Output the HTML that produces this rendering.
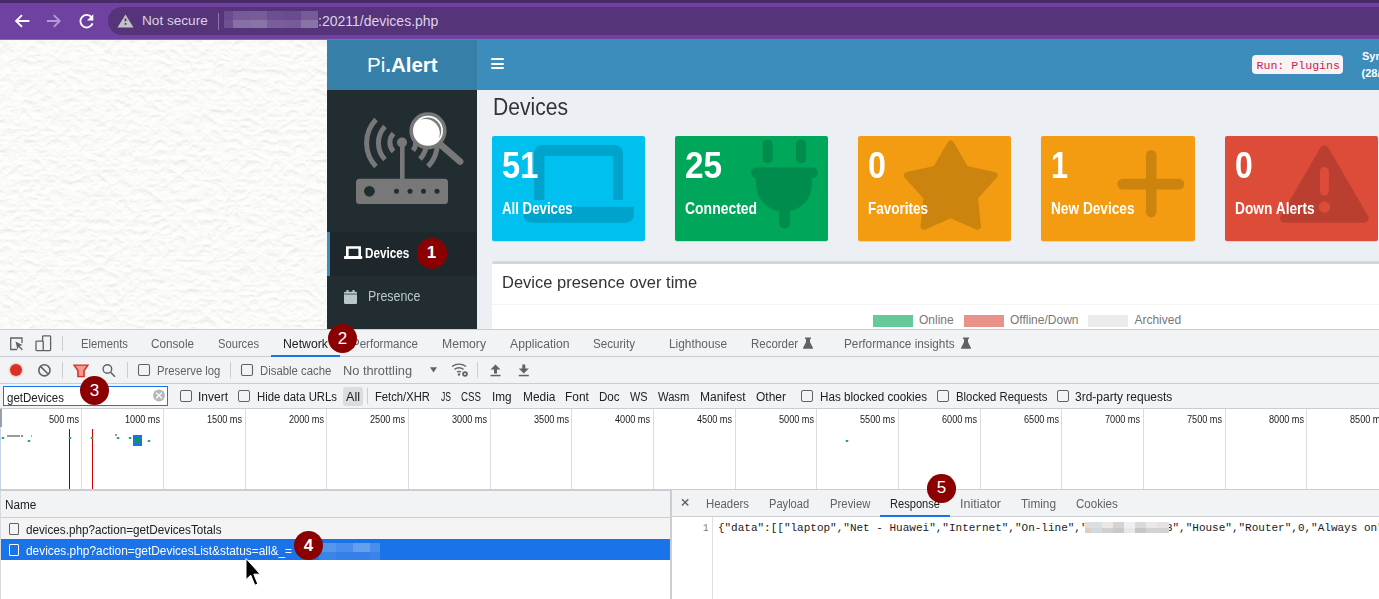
<!DOCTYPE html><html><head><meta charset="utf-8"><style>html,body{margin:0;padding:0;width:1379px;height:599px;overflow:hidden;position:relative;background:#fff}</style></head><body><div style="position:absolute;left:0px;top:0px;width:1379px;height:40px;background:#6f42a1;"></div><div style="position:absolute;left:0px;top:0px;width:1379px;height:3px;background:#482a68;"></div><div style="position:absolute;left:0px;top:39px;width:1379px;height:1px;background:#8a68ad;"></div><div style="position:absolute;left:108px;top:7px;width:1300px;height:28px;background:#553479;border-radius:14px;"></div><svg style="position:absolute;left:0;top:0" width="140" height="40">
<g fill="none" stroke="#fff" stroke-width="1.9" stroke-linejoin="miter">
<path d="M29.4 21H16.2M22 15.1L16.1 21L22 26.9"/>
</g>
<g fill="none" stroke="#b39ad3" stroke-width="1.9">
<path d="M46.9 21H59.6M53.8 15.1L59.7 21L53.8 26.9"/>
</g>
<path d="M91.9 17.6A6.3 6.3 0 1 0 92.6 23.4" fill="none" stroke="#fff" stroke-width="1.9"/>
<path d="M93.3 14.3v6.3h-6.3z" fill="#fff"/>
<path d="M125.5 14.5L133.5 27.5H117.5Z" fill="#c4c2c8"/>
<rect x="124.6" y="18.5" width="1.8" height="2.8" fill="#553479"/>
<rect x="124.6" y="23" width="1.8" height="1.8" fill="#553479"/>
</svg><div style="position:absolute;left:142px;top:14.49px;font:normal 13.6px/13.6px 'Liberation Sans', sans-serif;color:#ddd3e8;white-space:nowrap;">Not secure</div><div style="position:absolute;left:218px;top:13px;width:1px;height:17px;background:#8d76a8;"></div><div style="position:absolute;left:224px;top:11px;width:9px;height:8.9px;background:#6a4b8f;"></div><div style="position:absolute;left:224px;top:19.9px;width:9px;height:7.9px;background:#6e5093;"></div><div style="position:absolute;left:233px;top:11px;width:17px;height:8.9px;background:#765a98;"></div><div style="position:absolute;left:233px;top:19.9px;width:17px;height:7.9px;background:#8870a5;"></div><div style="position:absolute;left:250px;top:11px;width:17.2px;height:8.9px;background:#785c99;"></div><div style="position:absolute;left:250px;top:19.9px;width:17.2px;height:7.9px;background:#8a74a6;"></div><div style="position:absolute;left:267.2px;top:11px;width:16.8px;height:8.9px;background:#6c4f8f;"></div><div style="position:absolute;left:267.2px;top:19.9px;width:16.8px;height:7.9px;background:#785e9a;"></div><div style="position:absolute;left:284px;top:11px;width:16.9px;height:8.9px;background:#694c8d;"></div><div style="position:absolute;left:284px;top:19.9px;width:16.9px;height:7.9px;background:#765c98;"></div><div style="position:absolute;left:300.9px;top:11px;width:17.1px;height:8.9px;background:#775b98;"></div><div style="position:absolute;left:300.9px;top:19.9px;width:17.1px;height:7.9px;background:#8a73a6;"></div><div style="position:absolute;left:318px;top:14.15px;font:normal 14px/14px 'Liberation Sans', sans-serif;color:#ddd3e8;white-space:nowrap;">:20211/devices.php</div><svg style="position:absolute;left:0;top:40px" width="327" height="289">
<filter id="lt" x="0" y="0" width="100%" height="100%"><feTurbulence type="turbulence" baseFrequency="0.075 0.1" numOctaves="3" seed="11" result="n"/>
<feDiffuseLighting in="n" surfaceScale="2.2" lighting-color="#ffffff" diffuseConstant="1.0"><feDistantLight azimuth="90" elevation="60"/></feDiffuseLighting>
<feColorMatrix values="0.25 0 0 0 0.745  0.25 0 0 0 0.745  0.25 0 0 0 0.735  0 0 0 1 0"/></filter>
<rect width="327" height="289" fill="#f6f6f4"/>
<rect width="327" height="289" filter="url(#lt)"/>
</svg><div style="position:absolute;left:327px;top:40px;width:150px;height:50px;background:#367fa9;"></div><div style="position:absolute;left:477px;top:40px;width:902px;height:50px;background:#3c8dbc;"></div><div style="position:absolute;left:327px;top:90px;width:150px;height:239px;background:#222d32;"></div><div style="position:absolute;left:477px;top:90px;width:902px;height:239px;background:#ecf0f5;"></div><div style="position:absolute;left:367px;top:54.65px;font:20.5px/20.5px 'Liberation Sans', sans-serif;color:#fff;white-space:nowrap">Pi<b>.Alert</b></div><div style="position:absolute;left:491px;top:58px;width:13px;height:2.2px;background:#fff;border-radius:1px;"></div><div style="position:absolute;left:491px;top:62.5px;width:13px;height:2.2px;background:#fff;border-radius:1px;"></div><div style="position:absolute;left:491px;top:67px;width:13px;height:2.2px;background:#fff;border-radius:1px;"></div><div style="position:absolute;left:1252px;top:55px;width:91px;height:19px;background:#f9f2f4;border-radius:4px;"></div><div style="position:absolute;left:1256.5px;top:59.78px;font:normal 11.6px/11.6px 'Liberation Mono', monospace;color:#c7254e;white-space:nowrap;">Run: Plugins</div><div style="position:absolute;left:1362px;top:50.99px;font:bold 11px/11px 'Liberation Sans', sans-serif;color:#fff;white-space:nowrap;">Sym</div><div style="position:absolute;left:1361.5px;top:67.69px;font:bold 11px/11px 'Liberation Sans', sans-serif;color:#fff;white-space:nowrap;">(28/</div><svg style="position:absolute;left:327px;top:90px" width="150" height="140" viewBox="327 90 150 140">
<g fill="#787878">
<rect x="356" y="178.7" width="92" height="25.3" rx="3.5"/>
<rect x="400" y="142" width="4.6" height="38"/>
<circle cx="402" cy="142.5" r="5"/>
</g>
<circle cx="369.4" cy="191.3" r="5.4" fill="#222d32"/>
<g fill="#222d32"><circle cx="396.5" cy="191.3" r="2.5"/><circle cx="410" cy="191.3" r="2.5"/><circle cx="423.5" cy="191.3" r="2.5"/><circle cx="437" cy="191.3" r="2.5"/></g>
<g fill="none" stroke="#787878" stroke-width="5">
<path d="M376 119.5A34 34 0 0 0 376 166.5"/>
<path d="M385 126.5A24 24 0 0 0 385 159.5"/>
<path d="M393.5 133.5A13 13 0 0 0 393.5 151.5"/>
<path d="M413 150.5A13 13 0 0 0 413 134.5" />
<path d="M420 159A24 24 0 0 0 420 126"/>
<path d="M428 166.5A34 34 0 0 0 428 119.5"/>
</g>
<line x1="441" y1="145" x2="460" y2="161.5" stroke="#787878" stroke-width="6.8" stroke-linecap="round"/>
<circle cx="428" cy="130.8" r="18.6" fill="#787878"/>
<circle cx="428" cy="130.8" r="15" fill="#fff"/>
<mask id="cm"><rect x="400" y="100" width="60" height="60" fill="#fff"/><circle cx="425.2" cy="133.6" r="14.6" fill="#000"/></mask><circle cx="428" cy="130.8" r="13.3" fill="#7c7c7c" mask="url(#cm)"/>
</svg><div style="position:absolute;left:327px;top:232px;width:150px;height:44px;background:#1e282c;"></div><div style="position:absolute;left:327px;top:232px;width:3px;height:44px;background:#3c8dbc;"></div><svg style="position:absolute;left:344px;top:246px" width="19" height="13" viewBox="0 0 19 13">
<path d="M2 0.2h15v9.8h-2.6V2.7H4.6V10H2z" fill="#fff"/>
<rect x="0" y="10" width="18.3" height="3" rx="0.8" fill="#fff"/>
</svg><div style="position:absolute;left:365.3px;top:246.15px;font:bold 14px/14px 'Liberation Sans', sans-serif;color:#fff;white-space:nowrap;transform:scaleX(0.837);transform-origin:0 0;">Devices</div><svg style="position:absolute;left:344px;top:289px" width="14" height="16" viewBox="0 0 14 16">
<rect x="0" y="2.8" width="13" height="12.2" rx="1.3" fill="#b8c7ce"/>
<rect x="2.5" y="1" width="2" height="3" fill="#b8c7ce"/><rect x="8.5" y="1" width="2" height="3" fill="#b8c7ce"/>
<rect x="0" y="4.7" width="13" height="0.7" fill="#222d32"/>
</svg><div style="position:absolute;left:368px;top:290.12px;font:normal 13.8px/13.8px 'Liberation Sans', sans-serif;color:#b8c7ce;white-space:nowrap;transform:scaleX(0.9);transform-origin:0 0;">Presence</div><div style="position:absolute;left:492.5px;top:95.53px;font:normal 23px/23px 'Liberation Sans', sans-serif;color:#333;white-space:nowrap;transform:scaleX(0.918);transform-origin:0 0;">Devices</div><div style="position:absolute;left:492px;top:136px;width:152.7px;height:104.5px;background:#00c0ef;border-radius:2px;box-shadow:0 1px 1px rgba(0,0,0,0.1);"></div><div style="position:absolute;left:675px;top:136px;width:153px;height:104.5px;background:#00a65a;border-radius:2px;box-shadow:0 1px 1px rgba(0,0,0,0.1);"></div><div style="position:absolute;left:858px;top:136px;width:153px;height:104.5px;background:#f39c12;border-radius:2px;box-shadow:0 1px 1px rgba(0,0,0,0.1);"></div><div style="position:absolute;left:1041px;top:136px;width:154px;height:104.5px;background:#f39c12;border-radius:2px;box-shadow:0 1px 1px rgba(0,0,0,0.1);"></div><div style="position:absolute;left:1225px;top:136px;width:152.5px;height:104.5px;background:#dd4b39;border-radius:2px;box-shadow:0 1px 1px rgba(0,0,0,0.1);"></div><svg style="position:absolute;left:492px;top:136px" width="153" height="105" viewBox="0 0 153 105"><path d="M42 64V17a8 8 0 0 1 8 -8h73a8 8 0 0 1 8 8V64H121V20H52.4V64Z" fill="rgba(0,0,0,0.15)"/><path d="M31 70.7h111v8a8 8 0 0 1 -8 8h-95a8 8 0 0 1 -8 -8z" fill="rgba(0,0,0,0.15)"/></svg><div style="position:absolute;left:502px;top:147.48px;font:bold 37px/37px 'Liberation Sans', sans-serif;color:#fff;white-space:nowrap;transform:scaleX(0.882);transform-origin:0 0;">51</div><div style="position:absolute;left:502px;top:200.03px;font:bold 16.5px/16.5px 'Liberation Sans', sans-serif;color:#fff;white-space:nowrap;transform:scaleX(0.803);transform-origin:0 0;">All Devices</div><svg style="position:absolute;left:675px;top:136px" width="153" height="105" viewBox="0 0 153 105"><g fill="#000" opacity="0.15"><rect x="87.6" y="3.4" width="10.1" height="24" rx="5"/><rect x="121" y="3.4" width="10.1" height="24" rx="5"/><rect x="76" y="31.5" width="67" height="10.5" rx="5.2"/><path d="M81 40H137V48A28 28 0 0 1 81 48Z"/><rect x="104" y="66" width="11" height="26.6" rx="5.5"/></g></svg><div style="position:absolute;left:685px;top:147.48px;font:bold 37px/37px 'Liberation Sans', sans-serif;color:#fff;white-space:nowrap;transform:scaleX(0.902);transform-origin:0 0;">25</div><div style="position:absolute;left:685px;top:200.03px;font:bold 16.5px/16.5px 'Liberation Sans', sans-serif;color:#fff;white-space:nowrap;transform:scaleX(0.846);transform-origin:0 0;">Connected</div><svg style="position:absolute;left:858px;top:136px" width="153" height="105" viewBox="0 0 153 105"><polygon points="92.70,8.00 107.39,33.27 135.97,39.44 116.48,61.23 119.44,90.31 92.70,78.50 65.96,90.31 68.92,61.23 49.43,39.44 78.01,33.27" fill="#000" stroke="#000" stroke-width="7" stroke-linejoin="round" opacity="0.15"/></svg><div style="position:absolute;left:868px;top:147.48px;font:bold 37px/37px 'Liberation Sans', sans-serif;color:#fff;white-space:nowrap;transform:scaleX(0.87);transform-origin:0 0;">0</div><div style="position:absolute;left:868px;top:200.03px;font:bold 16.5px/16.5px 'Liberation Sans', sans-serif;color:#fff;white-space:nowrap;transform:scaleX(0.819);transform-origin:0 0;">Favorites</div><svg style="position:absolute;left:1041px;top:136px" width="153" height="105" viewBox="0 0 153 105"><g fill="#000" opacity="0.15"><rect x="104.9" y="13.9" width="10.6" height="67.5" rx="5.3"/><rect x="76.3" y="42.7" width="67.1" height="10.9" rx="5.4"/></g></svg><div style="position:absolute;left:1051px;top:147.48px;font:bold 37px/37px 'Liberation Sans', sans-serif;color:#fff;white-space:nowrap;transform:scaleX(0.826);transform-origin:0 0;">1</div><div style="position:absolute;left:1051px;top:200.03px;font:bold 16.5px/16.5px 'Liberation Sans', sans-serif;color:#fff;white-space:nowrap;transform:scaleX(0.828);transform-origin:0 0;">New Devices</div><svg style="position:absolute;left:1225px;top:136px" width="153" height="105" viewBox="0 0 153 105"><g opacity="0.15"><path d="M99.4 13.8L139.2 82.2H59.5Z" fill="#000" stroke="#000" stroke-width="9" stroke-linejoin="round"/></g><g fill="#dd4b39"><rect x="94.9" y="31" width="9" height="28.6" rx="4.5"/><circle cx="99.4" cy="71" r="5.7"/></g></svg><div style="position:absolute;left:1235px;top:147.48px;font:bold 37px/37px 'Liberation Sans', sans-serif;color:#fff;white-space:nowrap;transform:scaleX(0.86);transform-origin:0 0;">0</div><div style="position:absolute;left:1235px;top:200.03px;font:bold 16.5px/16.5px 'Liberation Sans', sans-serif;color:#fff;white-space:nowrap;transform:scaleX(0.833);transform-origin:0 0;">Down Alerts</div><div style="position:absolute;left:492px;top:261px;width:887px;height:68px;background:#fff;border-top:3px solid #d2d6de;box-sizing:border-box;border-radius:3px 0 0 0;"></div><div style="position:absolute;left:492px;top:304px;width:887px;height:1px;background:#f4f4f4;"></div><div style="position:absolute;left:502.3px;top:273.61px;font:normal 17px/17px 'Liberation Sans', sans-serif;color:#333;white-space:nowrap;transform:scaleX(0.97);transform-origin:0 0;">Device presence over time</div><div style="position:absolute;left:873px;top:315px;width:40px;height:12px;background:#66c99a;"></div><div style="position:absolute;left:919px;top:313.84px;font:normal 12px/12px 'Liberation Sans', sans-serif;color:#777;white-space:nowrap;">Online</div><div style="position:absolute;left:963.5px;top:315px;width:40px;height:12px;background:#e8928a;"></div><div style="position:absolute;left:1010px;top:313.84px;font:normal 12px/12px 'Liberation Sans', sans-serif;color:#777;white-space:nowrap;">Offline/Down</div><div style="position:absolute;left:1088px;top:315px;width:40px;height:12px;background:#ebebeb;"></div><div style="position:absolute;left:1134.4px;top:313.84px;font:normal 12px/12px 'Liberation Sans', sans-serif;color:#777;white-space:nowrap;">Archived</div><div style="position:absolute;left:0px;top:329px;width:1379px;height:270px;background:#f1f3f4;"></div><div style="position:absolute;left:0px;top:329px;width:1379px;height:1px;background:#cacdd1;"></div><div style="position:absolute;left:0px;top:356px;width:1379px;height:1px;background:#cacdd1;"></div><div style="position:absolute;left:0px;top:383px;width:1379px;height:1px;background:#cacdd1;"></div><div style="position:absolute;left:0px;top:407.5px;width:1379px;height:1px;background:#cacdd1;"></div><svg style="position:absolute;left:0;top:330px" width="70" height="26" viewBox="0 330 70 26">
<g fill="none" stroke="#5f6368" stroke-width="1.3">
<path d="M17 349.5H10.7V338H22V343"/>
<rect x="42.6" y="335.8" width="8" height="14.8" rx="0.8"/><rect x="36" y="341.2" width="7.2" height="9.4" rx="0.8" fill="#f1f3f4"/>
</g>
<path d="M15.5 341.5L22.5 345L19.6 346L22.8 349.2L21.8 350.2L18.6 347L17.5 349.8Z" fill="#5f6368"/>
<rect x="62" y="336" width="1" height="15" fill="#cacdd1"/>
</svg><div style="position:absolute;left:81px;top:338.49px;font:normal 12.3px/12.3px 'Liberation Sans', sans-serif;color:#5f6368;white-space:nowrap;transform:scaleX(0.917);transform-origin:0 0;">Elements</div><div style="position:absolute;left:151px;top:338.49px;font:normal 12.3px/12.3px 'Liberation Sans', sans-serif;color:#5f6368;white-space:nowrap;transform:scaleX(0.953);transform-origin:0 0;">Console</div><div style="position:absolute;left:217.5px;top:338.49px;font:normal 12.3px/12.3px 'Liberation Sans', sans-serif;color:#5f6368;white-space:nowrap;transform:scaleX(0.909);transform-origin:0 0;">Sources</div><div style="position:absolute;left:282.8px;top:338.49px;font:normal 12.3px/12.3px 'Liberation Sans', sans-serif;color:#202124;white-space:nowrap;transform:scaleX(0.998);transform-origin:0 0;">Network</div><div style="position:absolute;left:352px;top:338.49px;font:normal 12.3px/12.3px 'Liberation Sans', sans-serif;color:#5f6368;white-space:nowrap;transform:scaleX(0.937);transform-origin:0 0;">Performance</div><div style="position:absolute;left:441.8px;top:338.49px;font:normal 12.3px/12.3px 'Liberation Sans', sans-serif;color:#5f6368;white-space:nowrap;transform:scaleX(0.991);transform-origin:0 0;">Memory</div><div style="position:absolute;left:509.8px;top:338.49px;font:normal 12.3px/12.3px 'Liberation Sans', sans-serif;color:#5f6368;white-space:nowrap;transform:scaleX(0.991);transform-origin:0 0;">Application</div><div style="position:absolute;left:593.4px;top:338.49px;font:normal 12.3px/12.3px 'Liberation Sans', sans-serif;color:#5f6368;white-space:nowrap;transform:scaleX(0.945);transform-origin:0 0;">Security</div><div style="position:absolute;left:668.5px;top:338.49px;font:normal 12.3px/12.3px 'Liberation Sans', sans-serif;color:#5f6368;white-space:nowrap;transform:scaleX(0.964);transform-origin:0 0;">Lighthouse</div><div style="position:absolute;left:750.8px;top:338.49px;font:normal 12.3px/12.3px 'Liberation Sans', sans-serif;color:#5f6368;white-space:nowrap;transform:scaleX(0.933);transform-origin:0 0;">Recorder</div><div style="position:absolute;left:844.4px;top:338.49px;font:normal 12.3px/12.3px 'Liberation Sans', sans-serif;color:#5f6368;white-space:nowrap;transform:scaleX(0.957);transform-origin:0 0;">Performance insights</div><div style="position:absolute;left:271px;top:354.7px;width:69px;height:2px;background:#1a73e8;"></div><svg style="position:absolute;left:803px;top:337px" width="10" height="12" viewBox="0 0 10 12"><path d="M2 0.5h6v1.5h-1v3l3 6v0.8h-10v-0.8l3-6v-3h-1z" fill="#5f6368"/></svg><svg style="position:absolute;left:960.5px;top:337px" width="10" height="12" viewBox="0 0 10 12"><path d="M2 0.5h6v1.5h-1v3l3 6v0.8h-10v-0.8l3-6v-3h-1z" fill="#5f6368"/></svg><svg style="position:absolute;left:0;top:357px" width="540" height="26" viewBox="0 357 540 26">
<circle cx="16" cy="370" r="7.5" fill="#d93025" opacity="0.15"/>
<circle cx="16" cy="370" r="6" fill="#d93025"/>
<circle cx="44.4" cy="370.3" r="5.6" fill="none" stroke="#5f6368" stroke-width="1.6"/>
<path d="M40.5 366.4L48.3 374.2" stroke="#5f6368" stroke-width="1.6"/>
<rect x="62" y="362" width="1" height="16" fill="#cacdd1"/>
<path d="M74 365.2H88L84 370.5V376.6H78V370.5Z" fill="#e8685e"/>
<path d="M75.6 366H86.4L83 370.2V375.7H79V370.2Z" fill="#f09a92"/>
<path d="M74 365.2H88L84.2 370.5V376.6H77.8V370.5Z" fill="none" stroke="#d93025" stroke-width="1.3"/>
<circle cx="107.4" cy="369" r="4.3" fill="none" stroke="#5f6368" stroke-width="1.4"/>
<path d="M110.5 372.2L115 376.7" stroke="#5f6368" stroke-width="1.6"/>
<rect x="127" y="362" width="1" height="16" fill="#cacdd1"/>
<rect x="138.5" y="364.5" width="11" height="11" rx="1.5" fill="none" stroke="#5f6368" stroke-width="1.1"/>
<rect x="230" y="362" width="1" height="16" fill="#cacdd1"/>
<rect x="241.5" y="364.5" width="11" height="11" rx="1.5" fill="none" stroke="#5f6368" stroke-width="1.1"/>
<path d="M430 367.3H437L433.5 372.5Z" fill="#5f6368"/>
<path d="M452 366.5A12 12 0 0 1 466 366.5" fill="none" stroke="#5f6368" stroke-width="1.4"/>
<path d="M454.5 369.3A8 8 0 0 1 463.5 369.3" fill="none" stroke="#5f6368" stroke-width="1.4"/>
<path d="M457 372A4 4 0 0 1 461 372" fill="none" stroke="#5f6368" stroke-width="1.4"/>
<circle cx="459" cy="374.5" r="1.2" fill="#5f6368"/>
<circle cx="465" cy="374" r="2.8" fill="#5f6368"/><circle cx="465" cy="374" r="1" fill="#f1f3f4"/>
<rect x="477" y="362" width="1" height="16" fill="#cacdd1"/>
<path d="M495.5 364.5L490.5 369.5H494V373.5H497V369.5H500.5Z" fill="#5f6368"/><rect x="490.5" y="374.8" width="10" height="1.5" fill="#5f6368"/>
<path d="M523.8 373.5L518.8 368.5H522.3V364.5H525.3V368.5H528.8Z" fill="#5f6368"/><rect x="518.8" y="374.8" width="10" height="1.5" fill="#5f6368"/>
</svg><div style="position:absolute;left:156.6px;top:365.49px;font:normal 12.3px/12.3px 'Liberation Sans', sans-serif;color:#5f6368;white-space:nowrap;transform:scaleX(0.918);transform-origin:0 0;">Preserve log</div><div style="position:absolute;left:259.6px;top:365.49px;font:normal 12.3px/12.3px 'Liberation Sans', sans-serif;color:#5f6368;white-space:nowrap;transform:scaleX(0.924);transform-origin:0 0;">Disable cache</div><div style="position:absolute;left:342.5px;top:365.49px;font:normal 12.3px/12.3px 'Liberation Sans', sans-serif;color:#5f6368;white-space:nowrap;transform:scaleX(1.041);transform-origin:0 0;">No throttling</div><div style="position:absolute;left:3px;top:386px;width:164.5px;height:19.5px;background:#fff;border:1px solid #1a73e8;box-sizing:border-box;"></div><div style="position:absolute;left:7.3px;top:391.99px;font:normal 12.3px/12.3px 'Liberation Sans', sans-serif;color:#202124;white-space:nowrap;transform:scaleX(0.937);transform-origin:0 0;">getDevices</div><svg style="position:absolute;left:150px;top:386px" width="20" height="20" viewBox="150 386 20 20">
<circle cx="159" cy="395.4" r="6" fill="#b5b9be"/>
<path d="M156.2 392.6L161.8 398.2M161.8 392.6L156.2 398.2" stroke="#fff" stroke-width="1.3"/>
</svg><div style="position:absolute;left:179.5px;top:390px;width:12px;height:12px;background:transparent;border:1.1px solid #5f6368;border-radius:2px;box-sizing:border-box;"></div><div style="position:absolute;left:198px;top:391.49px;font:normal 12.3px/12.3px 'Liberation Sans', sans-serif;color:#202124;white-space:nowrap;transform:scaleX(0.975);transform-origin:0 0;">Invert</div><div style="position:absolute;left:238.0px;top:390px;width:12px;height:12px;background:transparent;border:1.1px solid #5f6368;border-radius:2px;box-sizing:border-box;"></div><div style="position:absolute;left:256.8px;top:391.49px;font:normal 12.3px/12.3px 'Liberation Sans', sans-serif;color:#202124;white-space:nowrap;transform:scaleX(0.921);transform-origin:0 0;">Hide data URLs</div><div style="position:absolute;left:343px;top:386.5px;width:19.6px;height:19px;background:#dadce0;border-radius:3px;"></div><div style="position:absolute;left:346px;top:391.49px;font:normal 12.3px/12.3px 'Liberation Sans', sans-serif;color:#202124;white-space:nowrap;transform:scaleX(1.024);transform-origin:0 0;">All</div><div style="position:absolute;left:367px;top:388px;width:1px;height:16px;background:#cacdd1;"></div><div style="position:absolute;left:375px;top:391.49px;font:normal 12.3px/12.3px 'Liberation Sans', sans-serif;color:#202124;white-space:nowrap;transform:scaleX(0.914);transform-origin:0 0;">Fetch/XHR</div><div style="position:absolute;left:441px;top:391.49px;font:normal 12.3px/12.3px 'Liberation Sans', sans-serif;color:#202124;white-space:nowrap;transform:scaleX(0.697);transform-origin:0 0;">JS</div><div style="position:absolute;left:461.4px;top:391.49px;font:normal 12.3px/12.3px 'Liberation Sans', sans-serif;color:#202124;white-space:nowrap;transform:scaleX(0.787);transform-origin:0 0;">CSS</div><div style="position:absolute;left:491.7px;top:391.49px;font:normal 12.3px/12.3px 'Liberation Sans', sans-serif;color:#202124;white-space:nowrap;transform:scaleX(0.956);transform-origin:0 0;">Img</div><div style="position:absolute;left:522.5px;top:391.49px;font:normal 12.3px/12.3px 'Liberation Sans', sans-serif;color:#202124;white-space:nowrap;transform:scaleX(0.97);transform-origin:0 0;">Media</div><div style="position:absolute;left:565px;top:391.49px;font:normal 12.3px/12.3px 'Liberation Sans', sans-serif;color:#202124;white-space:nowrap;transform:scaleX(0.967);transform-origin:0 0;">Font</div><div style="position:absolute;left:599px;top:391.49px;font:normal 12.3px/12.3px 'Liberation Sans', sans-serif;color:#202124;white-space:nowrap;transform:scaleX(0.942);transform-origin:0 0;">Doc</div><div style="position:absolute;left:630px;top:391.49px;font:normal 12.3px/12.3px 'Liberation Sans', sans-serif;color:#202124;white-space:nowrap;transform:scaleX(0.888);transform-origin:0 0;">WS</div><div style="position:absolute;left:658px;top:391.49px;font:normal 12.3px/12.3px 'Liberation Sans', sans-serif;color:#202124;white-space:nowrap;transform:scaleX(0.91);transform-origin:0 0;">Wasm</div><div style="position:absolute;left:700px;top:391.49px;font:normal 12.3px/12.3px 'Liberation Sans', sans-serif;color:#202124;white-space:nowrap;transform:scaleX(0.979);transform-origin:0 0;">Manifest</div><div style="position:absolute;left:756px;top:391.49px;font:normal 12.3px/12.3px 'Liberation Sans', sans-serif;color:#202124;white-space:nowrap;transform:scaleX(0.975);transform-origin:0 0;">Other</div><div style="position:absolute;left:801.0px;top:390px;width:12px;height:12px;background:transparent;border:1.1px solid #5f6368;border-radius:2px;box-sizing:border-box;"></div><div style="position:absolute;left:819.7px;top:391.49px;font:normal 12.3px/12.3px 'Liberation Sans', sans-serif;color:#202124;white-space:nowrap;transform:scaleX(0.949);transform-origin:0 0;">Has blocked cookies</div><div style="position:absolute;left:937.0px;top:390px;width:12px;height:12px;background:transparent;border:1.1px solid #5f6368;border-radius:2px;box-sizing:border-box;"></div><div style="position:absolute;left:955.6px;top:391.49px;font:normal 12.3px/12.3px 'Liberation Sans', sans-serif;color:#202124;white-space:nowrap;transform:scaleX(0.922);transform-origin:0 0;">Blocked Requests</div><div style="position:absolute;left:1057.0px;top:390px;width:12px;height:12px;background:transparent;border:1.1px solid #5f6368;border-radius:2px;box-sizing:border-box;"></div><div style="position:absolute;left:1075.4px;top:391.49px;font:normal 12.3px/12.3px 'Liberation Sans', sans-serif;color:#202124;white-space:nowrap;transform:scaleX(0.975);transform-origin:0 0;">3rd-party requests</div><div style="position:absolute;left:0px;top:408.5px;width:1379px;height:80.5px;background:#fff;"></div><div style="position:absolute;left:0px;top:489px;width:670px;height:2px;background:#cacdd1;"></div><div style="position:absolute;left:670px;top:489px;width:709px;height:1px;background:#cacdd1;"></div><div style="position:absolute;left:81px;top:409px;width:1px;height:80px;background:#dadce0;"></div><div style="position:absolute;left:48.63px;top:414.94px;font:normal 10px/10px 'Liberation Sans', sans-serif;color:#202124;white-space:nowrap;transform:scaleX(0.914);transform-origin:0 0;">500 ms</div><div style="position:absolute;left:163px;top:409px;width:1px;height:80px;background:#dadce0;"></div><div style="position:absolute;left:125.22px;top:414.94px;font:normal 10px/10px 'Liberation Sans', sans-serif;color:#202124;white-space:nowrap;transform:scaleX(0.914);transform-origin:0 0;">1000 ms</div><div style="position:absolute;left:245px;top:409px;width:1px;height:80px;background:#dadce0;"></div><div style="position:absolute;left:206.89px;top:414.94px;font:normal 10px/10px 'Liberation Sans', sans-serif;color:#202124;white-space:nowrap;transform:scaleX(0.914);transform-origin:0 0;">1500 ms</div><div style="position:absolute;left:326px;top:409px;width:1px;height:80px;background:#dadce0;"></div><div style="position:absolute;left:288.56px;top:414.94px;font:normal 10px/10px 'Liberation Sans', sans-serif;color:#202124;white-space:nowrap;transform:scaleX(0.914);transform-origin:0 0;">2000 ms</div><div style="position:absolute;left:408px;top:409px;width:1px;height:80px;background:#dadce0;"></div><div style="position:absolute;left:370.23px;top:414.94px;font:normal 10px/10px 'Liberation Sans', sans-serif;color:#202124;white-space:nowrap;transform:scaleX(0.914);transform-origin:0 0;">2500 ms</div><div style="position:absolute;left:490px;top:409px;width:1px;height:80px;background:#dadce0;"></div><div style="position:absolute;left:451.9px;top:414.94px;font:normal 10px/10px 'Liberation Sans', sans-serif;color:#202124;white-space:nowrap;transform:scaleX(0.914);transform-origin:0 0;">3000 ms</div><div style="position:absolute;left:571px;top:409px;width:1px;height:80px;background:#dadce0;"></div><div style="position:absolute;left:533.57px;top:414.94px;font:normal 10px/10px 'Liberation Sans', sans-serif;color:#202124;white-space:nowrap;transform:scaleX(0.914);transform-origin:0 0;">3500 ms</div><div style="position:absolute;left:653px;top:409px;width:1px;height:80px;background:#dadce0;"></div><div style="position:absolute;left:615.24px;top:414.94px;font:normal 10px/10px 'Liberation Sans', sans-serif;color:#202124;white-space:nowrap;transform:scaleX(0.914);transform-origin:0 0;">4000 ms</div><div style="position:absolute;left:735px;top:409px;width:1px;height:80px;background:#dadce0;"></div><div style="position:absolute;left:696.91px;top:414.94px;font:normal 10px/10px 'Liberation Sans', sans-serif;color:#202124;white-space:nowrap;transform:scaleX(0.914);transform-origin:0 0;">4500 ms</div><div style="position:absolute;left:816px;top:409px;width:1px;height:80px;background:#dadce0;"></div><div style="position:absolute;left:778.58px;top:414.94px;font:normal 10px/10px 'Liberation Sans', sans-serif;color:#202124;white-space:nowrap;transform:scaleX(0.914);transform-origin:0 0;">5000 ms</div><div style="position:absolute;left:898px;top:409px;width:1px;height:80px;background:#dadce0;"></div><div style="position:absolute;left:860.25px;top:414.94px;font:normal 10px/10px 'Liberation Sans', sans-serif;color:#202124;white-space:nowrap;transform:scaleX(0.914);transform-origin:0 0;">5500 ms</div><div style="position:absolute;left:980px;top:409px;width:1px;height:80px;background:#dadce0;"></div><div style="position:absolute;left:941.92px;top:414.94px;font:normal 10px/10px 'Liberation Sans', sans-serif;color:#202124;white-space:nowrap;transform:scaleX(0.914);transform-origin:0 0;">6000 ms</div><div style="position:absolute;left:1061px;top:409px;width:1px;height:80px;background:#dadce0;"></div><div style="position:absolute;left:1023.59px;top:414.94px;font:normal 10px/10px 'Liberation Sans', sans-serif;color:#202124;white-space:nowrap;transform:scaleX(0.914);transform-origin:0 0;">6500 ms</div><div style="position:absolute;left:1143px;top:409px;width:1px;height:80px;background:#dadce0;"></div><div style="position:absolute;left:1105.26px;top:414.94px;font:normal 10px/10px 'Liberation Sans', sans-serif;color:#202124;white-space:nowrap;transform:scaleX(0.914);transform-origin:0 0;">7000 ms</div><div style="position:absolute;left:1225px;top:409px;width:1px;height:80px;background:#dadce0;"></div><div style="position:absolute;left:1186.93px;top:414.94px;font:normal 10px/10px 'Liberation Sans', sans-serif;color:#202124;white-space:nowrap;transform:scaleX(0.914);transform-origin:0 0;">7500 ms</div><div style="position:absolute;left:1306px;top:409px;width:1px;height:80px;background:#dadce0;"></div><div style="position:absolute;left:1268.6px;top:414.94px;font:normal 10px/10px 'Liberation Sans', sans-serif;color:#202124;white-space:nowrap;transform:scaleX(0.914);transform-origin:0 0;">8000 ms</div><div style="position:absolute;left:1388px;top:409px;width:1px;height:80px;background:#dadce0;"></div><div style="position:absolute;left:1350.27px;top:414.94px;font:normal 10px/10px 'Liberation Sans', sans-serif;color:#202124;white-space:nowrap;transform:scaleX(0.914);transform-origin:0 0;">8500 ms</div><div style="position:absolute;left:0px;top:409px;width:2px;height:18px;background:#9aa0a6;"></div><div style="position:absolute;left:0px;top:427px;width:1px;height:62px;background:#c5d3ea;"></div><div style="position:absolute;left:69px;top:429px;width:1px;height:60px;background:#1a1aa6;"></div><div style="position:absolute;left:92px;top:429px;width:1px;height:60px;background:#d10000;"></div><div style="position:absolute;left:1.2px;top:437.2px;width:4px;height:2.3px;background:#c8ecd6;"></div><div style="position:absolute;left:2.2px;top:437.2px;width:2px;height:2.3px;background:#1fae5c;"></div><div style="position:absolute;left:26.5px;top:440.2px;width:4px;height:2.3px;background:#c8ecd6;"></div><div style="position:absolute;left:27.5px;top:440.2px;width:2px;height:2.3px;background:#1fae5c;"></div><div style="position:absolute;left:67.9px;top:437.2px;width:4px;height:2.3px;background:#c8ecd6;"></div><div style="position:absolute;left:68.9px;top:437.2px;width:2px;height:2.3px;background:#1fae5c;"></div><div style="position:absolute;left:89.6px;top:437.2px;width:4px;height:2.3px;background:#c8ecd6;"></div><div style="position:absolute;left:90.6px;top:437.2px;width:2px;height:2.3px;background:#1fae5c;"></div><div style="position:absolute;left:116px;top:437.2px;width:4px;height:2.3px;background:#c8ecd6;"></div><div style="position:absolute;left:117px;top:437.2px;width:2px;height:2.3px;background:#1fae5c;"></div><div style="position:absolute;left:127.6px;top:437.2px;width:4px;height:2.3px;background:#c8ecd6;"></div><div style="position:absolute;left:128.6px;top:437.2px;width:2px;height:2.3px;background:#1fae5c;"></div><div style="position:absolute;left:147.3px;top:440.2px;width:4px;height:2.3px;background:#c8ecd6;"></div><div style="position:absolute;left:148.3px;top:440.2px;width:2px;height:2.3px;background:#1fae5c;"></div><div style="position:absolute;left:845px;top:440.2px;width:4px;height:2.3px;background:#c8ecd6;"></div><div style="position:absolute;left:846px;top:440.2px;width:2px;height:2.3px;background:#1fae5c;"></div><div style="position:absolute;left:7px;top:434.5px;width:12.7px;height:2px;background:#9a9a9a;"></div><div style="position:absolute;left:21px;top:434.5px;width:2px;height:2px;background:#8a8a8a;"></div><div style="position:absolute;left:31.2px;top:434.5px;width:1px;height:2.5px;background:#aaa;"></div><div style="position:absolute;left:115px;top:434.3px;width:2px;height:1.3px;background:#999;"></div><div style="position:absolute;left:133.2px;top:435.2px;width:8.6px;height:10.4px;background:#1a73e8;"></div><div style="position:absolute;left:135.5px;top:437.2px;width:3.7px;height:5.8px;background:#0a9a4a;"></div><div style="position:absolute;left:0px;top:491px;width:671px;height:26px;background:#f1f3f4;"></div><div style="position:absolute;left:0px;top:517px;width:671px;height:1px;background:#cacdd1;"></div><div style="position:absolute;left:5px;top:499.49px;font:normal 12.3px/12.3px 'Liberation Sans', sans-serif;color:#202124;white-space:nowrap;transform:scaleX(0.957);transform-origin:0 0;">Name</div><div style="position:absolute;left:0px;top:518px;width:670px;height:21px;background:#f4f4f4;"></div><div style="position:absolute;left:0px;top:539px;width:670px;height:21px;background:#1a73e8;"></div><div style="position:absolute;left:0px;top:560px;width:671px;height:39px;background:#fff;"></div><div style="position:absolute;left:0px;top:491px;width:1px;height:108px;background:#d6d9dd;"></div><div style="position:absolute;left:9px;top:523.4px;width:10px;height:11.6px;background:transparent;border:1px solid #5f6368;border-radius:1px;box-sizing:border-box;"></div><div style="position:absolute;left:26px;top:524.19px;font:normal 12.3px/12.3px 'Liberation Sans', sans-serif;color:#202124;white-space:nowrap;transform:scaleX(0.952);transform-origin:0 0;">devices.php?action=getDevicesTotals</div><div style="position:absolute;left:9px;top:544.3px;width:10px;height:11.6px;background:transparent;border:1px solid #fff;border-radius:1px;box-sizing:border-box;"></div><div style="position:absolute;left:26px;top:545.09px;font:normal 12.3px/12.3px 'Liberation Sans', sans-serif;color:#fff;white-space:nowrap;transform:scaleX(0.967);transform-origin:0 0;">devices.php?action=getDevicesList&amp;status=all&amp;_=</div><div style="position:absolute;left:319px;top:543px;width:17px;height:8.7px;background:#5596ea;"></div><div style="position:absolute;left:319px;top:551.7px;width:17px;height:7.9px;background:#3a85e9;"></div><div style="position:absolute;left:336px;top:543px;width:17px;height:8.7px;background:#4b8ded;"></div><div style="position:absolute;left:336px;top:551.7px;width:17px;height:7.9px;background:#3580e8;"></div><div style="position:absolute;left:353px;top:543px;width:17px;height:8.7px;background:#62a0ee;"></div><div style="position:absolute;left:353px;top:551.7px;width:17px;height:7.9px;background:#3580e8;"></div><div style="position:absolute;left:370px;top:543px;width:10px;height:8.7px;background:#4a8ded;"></div><div style="position:absolute;left:370px;top:551.7px;width:10px;height:7.9px;background:#3a83e9;"></div><div style="position:absolute;left:670px;top:489px;width:2px;height:110px;background:#cacdd1;"></div><div style="position:absolute;left:672px;top:490px;width:707px;height:26px;background:#f1f3f4;"></div><div style="position:absolute;left:672px;top:516px;width:707px;height:1px;background:#cacdd1;"></div><div style="position:absolute;left:672px;top:517px;width:707px;height:82px;background:#fff;"></div><svg style="position:absolute;left:672px;top:491px" width="30" height="25" viewBox="672 491 30 25">
<path d="M682 499.3L688.3 505.6M688.3 499.3L682 505.6" stroke="#5f6368" stroke-width="1.4"/>
</svg><div style="position:absolute;left:706px;top:498.49px;font:normal 12.3px/12.3px 'Liberation Sans', sans-serif;color:#5f6368;white-space:nowrap;transform:scaleX(0.925);transform-origin:0 0;">Headers</div><div style="position:absolute;left:768.8px;top:498.49px;font:normal 12.3px/12.3px 'Liberation Sans', sans-serif;color:#5f6368;white-space:nowrap;transform:scaleX(0.904);transform-origin:0 0;">Payload</div><div style="position:absolute;left:829.6px;top:498.49px;font:normal 12.3px/12.3px 'Liberation Sans', sans-serif;color:#5f6368;white-space:nowrap;transform:scaleX(0.924);transform-origin:0 0;">Preview</div><div style="position:absolute;left:889.7px;top:498.49px;font:normal 12.3px/12.3px 'Liberation Sans', sans-serif;color:#202124;white-space:nowrap;transform:scaleX(0.903);transform-origin:0 0;">Response</div><div style="position:absolute;left:959.5px;top:498.49px;font:normal 12.3px/12.3px 'Liberation Sans', sans-serif;color:#5f6368;white-space:nowrap;transform:scaleX(1.017);transform-origin:0 0;">Initiator</div><div style="position:absolute;left:1021.4px;top:498.49px;font:normal 12.3px/12.3px 'Liberation Sans', sans-serif;color:#5f6368;white-space:nowrap;transform:scaleX(0.96);transform-origin:0 0;">Timing</div><div style="position:absolute;left:1076.4px;top:498.49px;font:normal 12.3px/12.3px 'Liberation Sans', sans-serif;color:#5f6368;white-space:nowrap;transform:scaleX(0.941);transform-origin:0 0;">Cookies</div><div style="position:absolute;left:880px;top:514.5px;width:70px;height:2px;background:#1a73e8;"></div><div style="position:absolute;left:712px;top:517px;width:1px;height:82px;background:#e0e0e0;"></div><div style="position:absolute;left:703px;top:522.99px;font:normal 11px/11px 'Liberation Mono', monospace;color:#6d7177;white-space:nowrap;transform:scaleX(0.85);transform-origin:0 0;">1</div><div style="position:absolute;left:717.9px;top:522.99px;font:normal 11px/11px 'Liberation Mono', monospace;color:#202124;white-space:nowrap;">{&quot;data&quot;:[[&quot;laptop&quot;,&quot;Net - Huawei&quot;,&quot;Internet&quot;,&quot;On-line&quot;,&quot;</div><div style="position:absolute;left:1165.9px;top:522.99px;font:normal 11px/11px 'Liberation Mono', monospace;color:#202124;white-space:nowrap;">3&quot;,&quot;House&quot;,&quot;Router&quot;,0,&quot;Always on&quot;</div><div style="position:absolute;left:1085px;top:522px;width:6px;height:5.8px;background:#e2ddd8;"></div><div style="position:absolute;left:1085px;top:527.8px;width:6px;height:5.1px;background:#d9cfc8;"></div><div style="position:absolute;left:1091px;top:522px;width:11px;height:5.8px;background:#d9dfe2;"></div><div style="position:absolute;left:1091px;top:527.8px;width:11px;height:5.1px;background:#d2d9df;"></div><div style="position:absolute;left:1102px;top:522px;width:11.2px;height:5.8px;background:#e8e8e8;"></div><div style="position:absolute;left:1102px;top:527.8px;width:11.2px;height:5.1px;background:#d0d0d0;"></div><div style="position:absolute;left:1113.2px;top:522px;width:10.8px;height:5.8px;background:#d8d2d2;"></div><div style="position:absolute;left:1113.2px;top:527.8px;width:10.8px;height:5.1px;background:#cfc7c7;"></div><div style="position:absolute;left:1124px;top:522px;width:11px;height:5.8px;background:#eeeff3;"></div><div style="position:absolute;left:1124px;top:527.8px;width:11px;height:5.1px;background:#e8e8ea;"></div><div style="position:absolute;left:1135px;top:522px;width:10.8px;height:5.8px;background:#dadada;"></div><div style="position:absolute;left:1135px;top:527.8px;width:10.8px;height:5.1px;background:#c6c6c8;"></div><div style="position:absolute;left:1145.8px;top:522px;width:11.2px;height:5.8px;background:#e8e8e8;"></div><div style="position:absolute;left:1145.8px;top:527.8px;width:11.2px;height:5.1px;background:#d2d4d3;"></div><div style="position:absolute;left:1157px;top:522px;width:11.5px;height:5.8px;background:#e6e1e2;"></div><div style="position:absolute;left:1157px;top:527.8px;width:11.5px;height:5.1px;background:#d6d0d0;"></div><div style="position:absolute;left:416.5px;top:238.4px;width:30.2px;height:30.2px;border-radius:50%;background:#8b0000;color:#fff;font:bold 17px/30.2px 'Liberation Sans', sans-serif;text-align:center">1</div><div style="position:absolute;left:327.8px;top:323.9px;width:29.4px;height:29.4px;border-radius:50%;background:#8b0000;color:#fff;font:normal 17px/29.4px 'Liberation Sans', sans-serif;text-align:center">2</div><div style="position:absolute;left:79.7px;top:375.7px;width:29.6px;height:29.6px;border-radius:50%;background:#8b0000;color:#fff;font:normal 17px/29.6px 'Liberation Sans', sans-serif;text-align:center">3</div><div style="position:absolute;left:294.0px;top:530.9px;width:29.2px;height:29.2px;border-radius:50%;background:#8b0000;color:#fff;font:bold 17px/29.2px 'Liberation Sans', sans-serif;text-align:center">4</div><div style="position:absolute;left:927.2px;top:474.0px;width:28.6px;height:28.6px;border-radius:50%;background:#8b0000;color:#fff;font:normal 17px/28.6px 'Liberation Sans', sans-serif;text-align:center">5</div><svg style="position:absolute;left:244px;top:556px" width="20" height="32" viewBox="244 556 20 32">
<path d="M246 558.5V579.5L250.8 575.2L254.8 585.2L257.8 584L253.8 574.2H260.2Z" fill="#000" stroke="#fff" stroke-width="1"/>
</svg></body></html>
